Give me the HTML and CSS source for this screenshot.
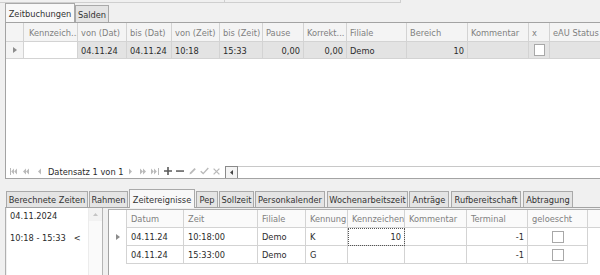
FILE: index.html
```html
<!DOCTYPE html>
<html lang="de">
<head>
<meta charset="utf-8">
<title>Zeitbuchungen</title>
<link rel="stylesheet" href="styles.css">
</head>
<body>
<div class="topstrip"><div class="topstrip-a"></div><div class="topstrip-b"></div></div>
<div class="tabs tabs-top">
  <div class="tab active tz">Zeitbuchungen</div>
  <div class="tab ts">Salden</div>
</div>
<div class="grid1">
  <div class="g1row g1head">
    <div class="c ind"></div>
    <div class="c pl">Kennzeich...</div>
    <div class="c">von (Dat)</div>
    <div class="c">bis (Dat)</div>
    <div class="c">von (Zeit)</div>
    <div class="c">bis (Zeit)</div>
    <div class="c">Pause</div>
    <div class="c">Korrekt...</div>
    <div class="c">Filiale</div>
    <div class="c">Bereich</div>
    <div class="c">Kommentar</div>
    <div class="c">x</div>
    <div class="c">eAU Status</div>
  </div>
  <div class="g1row g1data">
    <div class="c ind"><svg class="tri" width="4" height="6" viewBox="0 0 4 6"><path d="M0 0L4 3L0 6z"/></svg></div>
    <div class="c focus"></div>
    <div class="c">04.11.24</div>
    <div class="c">04.11.24</div>
    <div class="c">10:18</div>
    <div class="c">15:33</div>
    <div class="c r">0,00</div>
    <div class="c r">0,00</div>
    <div class="c">Demo</div>
    <div class="c r">10</div>
    <div class="c"></div>
    <div class="c ctr"><span class="chk chk1"></span></div>
    <div class="c"></div>
  </div>
  <div class="g1body"></div>
  <div class="nav">
    <svg class="ni n-first" width="7" height="7" viewBox="0 0 7 7"><rect x="0" y="0" width="1" height="7"/><path d="M4 0.5v6L1.2 3.5z M7 0.5v6L4.2 3.5z"/></svg>
    <svg class="ni n-pp" width="6" height="7" viewBox="0 0 6 7"><path d="M3 0.5v6L0 3.5z M6 0.5v6L3 3.5z"/></svg>
    <svg class="ni n-p" width="3" height="7" viewBox="0 0 3 7"><path d="M3 0.5v6L0 3.5z"/></svg>
    <span class="navtext">Datensatz 1 von 1</span>
    <svg class="ni n-n" width="3" height="7" viewBox="0 0 3 7"><path d="M0 0.5v6L3 3.5z"/></svg>
    <svg class="ni n-nn" width="6" height="7" viewBox="0 0 6 7"><path d="M0 0.5v6L3 3.5z M3 0.5v6L6 3.5z"/></svg>
    <svg class="ni n-last" width="8" height="7" viewBox="0 0 8 7"><path d="M0 0.5v6L2.8 3.5z M3 0.5v6L5.8 3.5z"/><rect x="7" y="0" width="1" height="7"/></svg>
    <svg class="ni dark n-plus" width="8" height="8" viewBox="0 0 8 8"><path d="M3.2 0h1.6v8H3.2zM0 3.2h8v1.6H0z"/></svg>
    <svg class="ni dark n-minus" width="8" height="8" viewBox="0 0 8 8"><path d="M0 3.3h8v1.5H0z"/></svg>
    <svg class="ni n-edit" width="7" height="8" viewBox="0 0 7 8"><path d="M0.5 7.5L1 5.5L5.5 1L6.8 2.3L2.3 6.8z"/></svg>
    <svg class="ni n-ok" width="9" height="8" viewBox="0 0 9 8"><path d="M0.7 4.2L3.2 6.6L8.3 1" fill="none" stroke-width="1.4"/></svg>
    <svg class="ni n-x" width="7" height="7" viewBox="0 0 7 7"><path d="M0.6 0.6L6.4 6.4M6.4 0.6L0.6 6.4" fill="none" stroke-width="1.3"/></svg>
    <div class="hscroll">
      <div class="hbtn"><svg width="3" height="5" viewBox="0 0 3 5"><path d="M3 0v5L0 2.5z"/></svg></div>
      <div class="htrack"></div>
    </div>
  </div>
</div>

<div class="tabs tabs-bot">
  <div class="tab t1">Berechnete Zeiten</div>
  <div class="tab t2">Rahmen</div>
  <div class="tab active t3">Zeitereignisse</div>
  <div class="tab t4">Pep</div>
  <div class="tab t5">Sollzeit</div>
  <div class="tab t6">Personkalender</div>
  <div class="tab t7">Wochenarbeitszeit</div>
  <div class="tab t8">Anträge</div>
  <div class="tab t9">Rufbereitschaft</div>
  <div class="tab t10">Abtragung</div>
</div>
<div class="panel">
  <div class="list">
    <div class="list-items">
      <div class="li li1">04.11.2024</div>
      <div class="li li2">10:18 - 15:33   &lt;</div>
    </div>
    <div class="vscroll">
      <div class="vbtn"><svg width="5" height="3" viewBox="0 0 5 3"><path d="M0 3L2.5 0L5 3z"/></svg></div>
    </div>
  </div>
  <div class="grid2">
    <div class="g2row g2head">
      <div class="c ind noline"></div>
      <div class="c">Datum</div>
      <div class="c">Zeit</div>
      <div class="c">Filiale</div>
      <div class="c">Kennung</div>
      <div class="c">Kennzeichen</div>
      <div class="c">Kommentar</div>
      <div class="c">Terminal</div>
      <div class="c">geloescht</div>
      <div class="c fill"></div>
    </div>
    <div class="g2row">
      <div class="c ind noline"><svg class="tri" width="4" height="6" viewBox="0 0 4 6"><path d="M0 0L4 3L0 6z"/></svg></div>
      <div class="c">04.11.24</div>
      <div class="c">10:18:00</div>
      <div class="c">Demo</div>
      <div class="c">K</div>
      <div class="c r dotted">10</div>
      <div class="c"></div>
      <div class="c r">-1</div>
      <div class="c ctr"><span class="chk"></span></div>
    </div>
    <div class="g2row">
      <div class="c ind noline"></div>
      <div class="c">04.11.24</div>
      <div class="c">15:33:00</div>
      <div class="c">Demo</div>
      <div class="c">G</div>
      <div class="c"></div>
      <div class="c"></div>
      <div class="c r">-1</div>
      <div class="c ctr"><span class="chk"></span></div>
    </div>
  </div>
</div>
</body>
</html>
```

FILE: styles.css
```css
* { box-sizing: border-box; }

html, body {
  margin: 0;
  width: 600px;
  height: 275px;
  overflow: hidden;
}

body {
  background: #f0f0f0;
  font-family: "DejaVu Sans Condensed", "DejaVu Sans", sans-serif;
  font-size: 9.2px;
  color: #2b2b2b;
}

/* top strip (bottom edge of an upper panel) */
.topstrip {
  height: 3px;
  display: flex;
}
.topstrip-a {
  width: 225px;
  border-bottom: 1px solid #cfcfcf;
  border-right: 1px solid #cfcfcf;
}
.topstrip-b {
  width: 176px;
  border-bottom: 1px solid #cfcfcf;
  border-right: 1px solid #cfcfcf;
}

/* tabs */
.tabs {
  display: flex;
  align-items: flex-end;
  padding-left: 5px;
}
.tab {
  border: 1px solid #a9a9a9;
  border-bottom: 0;
  background: #e4e4e4;
  display: flex;
  align-items: center;
  justify-content: center;
  white-space: nowrap;
  color: #333;
}
.tab.active {
  background: #f8f8f8;
}

.tabs-top { height: 19px; }
.tabs-top .tab { height: 17px; }
.tabs-top .tab.active { height: 19px; }
.tz { width: 70px; }
.ts { width: 34px; margin-left: 0; }

.tabs-bot {
  height: 18px;
  margin-top: 10px;
  padding-left: 6px;
}
.tabs-bot .tab { height: 16px; margin-right: 1px; }
.tabs-bot .tab.active { height: 19px; margin-bottom: -1px; position: relative; }
.t1 { width: 82px; }
.t2 { width: 39px; }
.t3 { width: 66px; }
.t4 { width: 22px; }
.t5 { width: 35px; }
.t6 { width: 70px; }
.t7 { width: 81px; margin-left: 1px; }
.t8 { width: 40px; }
.t9 { width: 70px; margin-left: 1px; }
.t10 { width: 50px; margin-left: 1px; }

/* top grid */
.grid1 {
  margin-left: 5px;
  height: 157px;
  border: 1px solid #a3a3a3;
  border-right: 0;
  background: #fff;
  display: flex;
  flex-direction: column;
  overflow: hidden;
}
.g1row {
  display: grid;
  grid-template-columns: 18px 54px 49px 45px 48px 43px 41px 43px 60px 61px 61px 21px 80px;
  border-bottom: 1px solid #d3d3d3;
  flex: none;
}
.g1head {
  height: 19px;
  background: #f4f4f4;
  color: #808080;
}
.g1data {
  height: 17px;
  background: #e3e3e3;
}
.c {
  border-right: 1px solid #d3d3d3;
  padding: 0 3px;
  display: flex;
  align-items: center;
  white-space: nowrap;
  overflow: hidden;
}
.c.pl { padding-left: 5px; }
.c.r { justify-content: flex-end; }
.c.ctr { justify-content: center; }
.g1data .ind { background: #f4f4f4; padding-left: 7px; }
.g1data .focus { background: #fff; }

.tri { fill: #8c8c8c; }

.chk {
  display: block;
  width: 12px;
  height: 12px;
  background: #fff;
  border: 1px solid #a8a8a8;
}
.chk1 { width: 11px; height: 12px; }

.g1body { flex: 1; }

/* navigator */
.nav {
  height: 14px;
  flex: none;
  display: flex;
  align-items: center;
}
.ni { fill: #bababa; stroke: #bababa; stroke-width: 0; flex: none; }
.ni.dark { fill: #5a5a5a; }
.n-ok, .n-x { stroke-width: 1.3; fill: none; }
.n-first { margin-left: 4px; }
.n-pp { margin-left: 6px; }
.n-p { margin-left: 9px; }
.navtext {
  width: 81px;
  margin-left: 7px;
  color: #2b2b2b;
  white-space: nowrap;
}
.n-n { margin-left: 0; }
.n-nn { margin-left: 8px; }
.n-last { margin-left: 5px; }
.n-plus { margin-left: 5px; }
.n-minus { margin-left: 4px; }
.n-edit { margin-left: 5px; }
.n-ok { margin-left: 4px; }
.n-x { margin-left: 4px; }
.hscroll {
  margin-left: 5px;
  align-self: flex-end;
  height: 12px;
  flex: 1;
  display: flex;
  border-top: 1px solid #c8c8c8;
}
.hbtn {
  width: 13px;
  border: 1px solid #8a8a8a;
  border-bottom: 0;
  background: #f4f4f4;
  display: flex;
  align-items: center;
  justify-content: center;
  fill: #444;
  margin-top: -1px;
}
.htrack { flex: 1; background: #fff; }

/* bottom panel */
.panel {
  margin-left: 5px;
  height: 70px;
  border-top: 1px solid #a3a3a3;
  border-left: 1px solid #b0b0b0;
  display: flex;
}
.list {
  margin-left: 1px;
  width: 96px;
  background: #fff;
  border-right: 1px solid #b5b5b5;
  display: flex;
}
.list-items {
  flex: 1;
  padding-left: 3px;
  color: #2b2b2b;
}
.li { white-space: pre; height: 14px; display: flex; align-items: center; }
.li1 { margin-top: 0; }
.li2 { margin-top: 8px; }
.vscroll {
  width: 14px;
  background: #fafafa;
  border-left: 1px solid #ececec;
}
.vbtn {
  height: 13px;
  background: #f2f2f2;
  display: flex;
  align-items: center;
  justify-content: center;
  fill: #c4c4c4;
}

.grid2 {
  margin-left: 5px;
  margin-top: 1px;
  flex: 1;
  background: #fff;
  border-top: 1px solid #b0b0b0;
  border-left: 1px solid #a3a3a3;
}
.g2row {
  display: grid;
  grid-template-columns: 18px 57px 74px 48px 42px 57px 62px 61px 60px;
  height: 18px;
}
.g2head {
  grid-template-columns: 18px 57px 74px 48px 42px 57px 62px 61px 60px 1fr;
  background: #fafafa;
  color: #808080;
}
.g2row .c {
  border-bottom: 1px solid #d3d3d3;
  padding-left: 4px;
}
.g2row .c.r { padding-right: 3px; }
.g2row .c.noline { border-bottom: 0; background: #fff; }
.g2row .ind { padding-left: 7px; }
.g2head .fill { border-right: 0; }
.dotted {
  outline: 1px dotted #555;
  outline-offset: -1px;
}
```
